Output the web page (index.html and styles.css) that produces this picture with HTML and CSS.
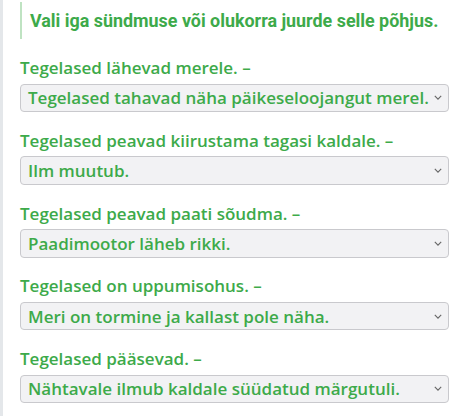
FILE: index.html
```html
<!DOCTYPE html>
<html lang="et">
<head>
<meta charset="utf-8">
<link rel="stylesheet" href="styles.css">
</head>
<body>
<div class="page">
  <div class="content">
    <div class="prompt">Vali iga sündmuse või olukorra juurde selle põhjus.</div>
    <div class="items">
      <div class="item">
        <div class="label">Tegelased lähevad merele. –</div>
        <div class="select"><span>Tegelased tahavad näha päikeseloojangut merel.</span><svg class="chev" viewBox="0 0 10 6" width="8" height="5"><path d="M1 1l4 4 4-4" fill="none" stroke="#666" stroke-width="1.4"/></svg></div>
      </div>
      <div class="item">
        <div class="label">Tegelased peavad kiirustama tagasi kaldale. –</div>
        <div class="select"><span>Ilm muutub.</span><svg class="chev" viewBox="0 0 10 6" width="8" height="5"><path d="M1 1l4 4 4-4" fill="none" stroke="#666" stroke-width="1.4"/></svg></div>
      </div>
      <div class="item">
        <div class="label">Tegelased peavad paati sõudma. –</div>
        <div class="select"><span>Paadimootor läheb rikki.</span><svg class="chev" viewBox="0 0 10 6" width="8" height="5"><path d="M1 1l4 4 4-4" fill="none" stroke="#666" stroke-width="1.4"/></svg></div>
      </div>
      <div class="item">
        <div class="label">Tegelased on uppumisohus. –</div>
        <div class="select"><span>Meri on tormine ja kallast pole näha.</span><svg class="chev" viewBox="0 0 10 6" width="8" height="5"><path d="M1 1l4 4 4-4" fill="none" stroke="#666" stroke-width="1.4"/></svg></div>
      </div>
      <div class="item">
        <div class="label">Tegelased pääsevad. –</div>
        <div class="select"><span>Nähtavale ilmub kaldale süüdatud märgutuli.</span><svg class="chev" viewBox="0 0 10 6" width="8" height="5"><path d="M1 1l4 4 4-4" fill="none" stroke="#666" stroke-width="1.4"/></svg></div>
      </div>
    </div>
  </div>
</div>
</body>
</html>
```
FILE: styles.css
```css
html, body {
  margin: 0;
  padding: 0;
  background: #fff;
}
.page {
  border-left: 3px solid #e4e7ea;
  min-height: 416px;
  box-sizing: border-box;
}
.content {
  padding: 2px 23px 0 17px;
}
.prompt {
  border-left: 2px solid #bfe3c2;
  padding: 9px 0 8px 8px;
  font-family: Roboto, sans-serif;
  font-weight: 700;
  font-size: 17.9px;
  line-height: 20px;
  color: #3daa4a;
}
.items {
  display: flex;
  flex-direction: column;
  gap: 16.75px;
  margin-top: 17px;
}
.label {
  font-family: "Open Sans", sans-serif;
  font-weight: 600;
  font-size: 17px;
  line-height: 24px;
  color: #3daa4a;
  margin-bottom: 3.5px;
}
.select {
  display: flex;
  align-items: center;
  justify-content: space-between;
  height: 28.5px;
  box-sizing: border-box;
  border: 1px solid #c9c9cd;
  border-radius: 4px;
  background: #f2f2f4;
  padding: 0 6px 0 7px;
  font-family: "Open Sans", sans-serif;
  font-weight: 600;
  font-size: 17px;
  color: #3daa4a;
}
.chev {
  flex: none;
}
```
